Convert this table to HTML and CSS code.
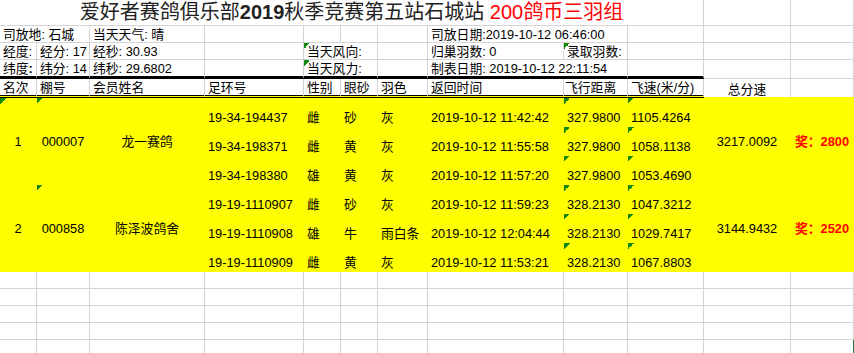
FILE: index.html
```html
<!DOCTYPE html>
<html lang="zh-CN">
<head>
<meta charset="utf-8">
<title>爱好者赛鸽俱乐部2019秋季竞赛第五站石城站</title>
<link rel="stylesheet" href="styles.css">
</head>
<body>
<div class="sheet">
  <!-- 标题 -->
  <div class="c title s10"><span class="t-dark">爱好者赛鸽俱乐部<b>2019</b>秋季竞赛第五站石城站</span>&nbsp;<span class="t-red">200鸽币三羽组</span></div>
  <div class="c"></div><div class="c"></div>

  <!-- 信息行 1 -->
  <div class="c s2">司放地: 石城</div>
  <div class="c">当天天气: 晴</div>
  <div class="c"></div><div class="c"></div><div class="c"></div><div class="c"></div>
  <div class="c s2">司放日期:2019-10-12 06:46:00</div>
  <div class="c"></div><div class="c"></div><div class="c"></div>

  <!-- 信息行 2 -->
  <div class="c">经度:</div>
  <div class="c">经分: 17</div>
  <div class="c">经秒: 30.93</div>
  <div class="c"></div>
  <div class="c s2 tri">当天风向:</div>
  <div class="c"></div>
  <div class="c">归巢羽数: 0</div>
  <div class="c tri">录取羽数:</div>
  <div class="c"></div><div class="c"></div><div class="c"></div>

  <!-- 信息行 3 -->
  <div class="c bt">纬度<b>:</b></div>
  <div class="c bt">纬分: 14</div>
  <div class="c bt">纬秒: 29.6802</div>
  <div class="c bt"></div>
  <div class="c s2 bt tri">当天风力:</div>
  <div class="c bt"></div>
  <div class="c s2 bt">制表日期: 2019-10-12 22:11:54</div>
  <div class="c bt"></div>
  <div class="c"></div><div class="c"></div>

  <!-- 表头 -->
  <div class="c hd">名次</div>
  <div class="c hd">棚号</div>
  <div class="c hd">会员姓名</div>
  <div class="c hd">足环号</div>
  <div class="c hd">性别</div>
  <div class="c hd">眼砂</div>
  <div class="c hd">羽色</div>
  <div class="c hd">返回时间</div>
  <div class="c hd hd-tight">飞行距离</div>
  <div class="c hd">飞速(米/分)</div>
  <div class="c hd2 ctr">总分速</div>
  <div class="c hd2"></div>

  <!-- 第 1 名 -->
  <div class="c y r3 mid ctr tri">1</div>
  <div class="c y r3 mid ctr tri">000007</div>
  <div class="c y r3 mid ctr">龙一赛鸽</div>
  <div class="c y">19-34-194437</div>
  <div class="c y">雌</div>
  <div class="c y">砂</div>
  <div class="c y">灰</div>
  <div class="c y">2019-10-12 11:42:42</div>
  <div class="c y tri">327.9800</div>
  <div class="c y tri">1105.4264</div>
  <div class="c y r3 mid ctr">3217.0092</div>
  <div class="c y r3 mid ctr prize">奖：2800</div>

  <div class="c y">19-34-198371</div>
  <div class="c y">雌</div>
  <div class="c y">黄</div>
  <div class="c y">灰</div>
  <div class="c y">2019-10-12 11:55:58</div>
  <div class="c y tri">327.9800</div>
  <div class="c y tri">1058.1138</div>

  <div class="c y">19-34-198380</div>
  <div class="c y">雄</div>
  <div class="c y">黄</div>
  <div class="c y">灰</div>
  <div class="c y">2019-10-12 11:57:20</div>
  <div class="c y tri">327.9800</div>
  <div class="c y tri">1053.4690</div>

  <!-- 第 2 名 -->
  <div class="c y r3 mid ctr">2</div>
  <div class="c y r3 mid ctr tri">000858</div>
  <div class="c y r3 mid ctr">陈泽波鸽舍</div>
  <div class="c y">19-19-1110907</div>
  <div class="c y">雌</div>
  <div class="c y">砂</div>
  <div class="c y">灰</div>
  <div class="c y">2019-10-12 11:59:23</div>
  <div class="c y tri">328.2130</div>
  <div class="c y tri">1047.3212</div>
  <div class="c y r3 mid ctr">3144.9432</div>
  <div class="c y r3 mid ctr prize">奖：2520</div>

  <div class="c y">19-19-1110908</div>
  <div class="c y">雄</div>
  <div class="c y">牛</div>
  <div class="c y">雨白条</div>
  <div class="c y">2019-10-12 12:04:44</div>
  <div class="c y tri">328.2130</div>
  <div class="c y tri">1029.7417</div>

  <div class="c y">19-19-1110909</div>
  <div class="c y">雌</div>
  <div class="c y">黄</div>
  <div class="c y">灰</div>
  <div class="c y">2019-10-12 11:53:21</div>
  <div class="c y tri">328.2130</div>
  <div class="c y tri">1067.8803</div>

  <!-- 空行 -->
  <div class="c"></div><div class="c"></div><div class="c"></div><div class="c"></div><div class="c"></div><div class="c"></div>
  <div class="c"></div><div class="c"></div><div class="c"></div><div class="c"></div><div class="c"></div><div class="c"></div>

  <div class="c"></div><div class="c"></div><div class="c"></div><div class="c"></div><div class="c"></div><div class="c"></div>
  <div class="c"></div><div class="c"></div><div class="c"></div><div class="c"></div><div class="c"></div><div class="c"></div>

  <div class="c"></div><div class="c"></div><div class="c"></div><div class="c"></div><div class="c"></div><div class="c"></div>
  <div class="c"></div><div class="c"></div><div class="c"></div><div class="c"></div><div class="c"></div><div class="c"></div>

  <div class="c"></div><div class="c"></div><div class="c"></div><div class="c"></div><div class="c"></div><div class="c"></div>
  <div class="c"></div><div class="c"></div><div class="c"></div><div class="c"></div><div class="c"></div><div class="c"></div>

  <div class="c"></div><div class="c"></div><div class="c"></div><div class="c"></div><div class="c"></div><div class="c"></div>
  <div class="c"></div><div class="c"></div><div class="c"></div><div class="c"></div><div class="c"></div><div class="c sel"></div>
</div>
</body>
</html>
```

FILE: styles.css
```css
html, body {
  margin: 0;
  padding: 0;
  background: #fff;
  overflow: hidden;
}

body {
  font-family: "Liberation Sans", "Noto Sans CJK SC", sans-serif;
  color: #000;
}

.sheet {
  display: grid;
  width: 854px;
  grid-template-columns: 37px 53px 115px 99px 37px 37px 50px 136px 64px 76px 87px 63px;
  grid-template-rows: 26px 17px 17px 19px 19px repeat(6, 29px) repeat(4, 17px) 14px;
}

.c {
  box-sizing: border-box;
  min-width: 0;
  display: flex;
  align-items: flex-end;
  padding: 0 3px;
  border-right: 1px solid #d4d4d4;
  border-bottom: 1px solid #d4d4d4;
  font-size: 12.8px;
  line-height: 15px;
  white-space: nowrap;
}

.s2 { grid-column: span 2; }
.s10 { grid-column: span 10; }
.r3 { grid-row: span 3; }

.mid { align-items: center; }
.ctr { justify-content: center; }

/* title */
.title {
  justify-content: center;
  align-items: center;
  padding: 0 0 1px;
  font-size: 20px;
  line-height: 24px;
}
.t-dark { color: #222; }
.t-dark b { font-weight: bold; }
.t-red { color: #ff0000; }

/* thick rule under the info block */
.bt { border-bottom: 3px solid #000; }

/* column header row */
.hd {
  border-bottom: 3px double #000;
  background: linear-gradient(#fff, #fff) padding-box, #ffff00;
}
.hd-tight { padding-left: 1px; }
.hd2 { border-bottom: 1px solid #ffff00; }

/* yellow result block */
.y {
  background-color: #ffff00;
  border-color: #ffff00;
  padding-bottom: 1px;
}
.y.mid { padding-bottom: 0; }

/* green note indicator */
.tri {
  background-image: linear-gradient(135deg, #128a12 50%, transparent 50%);
  background-size: 6px 6px;
  background-repeat: no-repeat;
  background-position: 0 0;
}

.prize {
  color: #ff0000;
  font-weight: bold;
}

.sel { border-right-color: #217346; }
```
